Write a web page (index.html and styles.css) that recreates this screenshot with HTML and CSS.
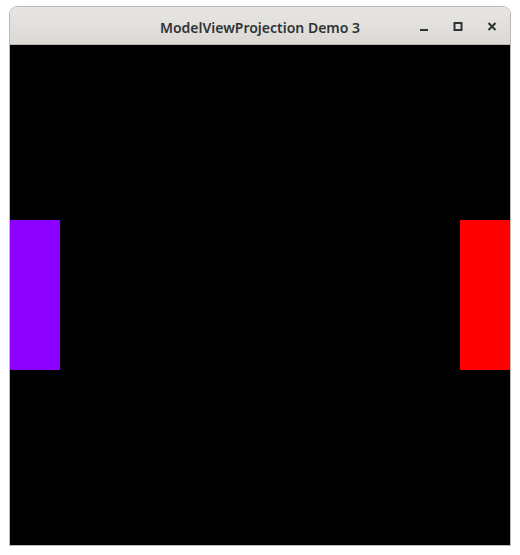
FILE: index.html
```html
<!DOCTYPE html>
<html>
<head>
<meta charset="utf-8">
<link rel="stylesheet" href="styles.css">
</head>
<body>
<div class="window">
  <div class="titlebar">
    <span class="title">ModelViewProjection Demo 3</span>
    <div class="controls">
      <span class="btn"><svg width="10" height="10" viewBox="0 0 10 10"><rect x="1" y="7" width="8" height="2" fill="#2e3436"/></svg></span>
      <span class="btn"><svg width="10" height="10" viewBox="0 0 10 10"><rect x="1.5" y="1" width="7" height="7" fill="none" stroke="#2e3436" stroke-width="2"/></svg></span>
      <span class="btn"><svg width="10" height="10" viewBox="0 0 10 10"><path d="M1.5 1 L8.5 8 M8.5 1 L1.5 8" stroke="#2e3436" stroke-width="2"/></svg></span>
    </div>
  </div>
  <div class="canvas">
    <div class="bar purple"></div>
    <div class="bar red"></div>
  </div>
</div>
</body>
</html>
```
FILE: styles.css
```css
html, body {
  margin: 0;
  padding: 0;
  background: #ffffff;
}
body {
  padding: 6px 0 0 9px;
}
.window {
  width: 500px;
  border: 1px solid #bdbab6;
  border-radius: 8px 8px 0 0;
  display: flex;
  flex-direction: column;
  overflow: hidden;
}
.titlebar {
  height: 37px;
  border-bottom: 1px solid #bfb8b1;
  background: linear-gradient(#e8e6e3, #dcd9d5);
  display: flex;
  align-items: center;
  justify-content: center;
  position: relative;
}
.title {
  font-family: "Noto Sans", "DejaVu Sans", sans-serif;
  font-weight: 600;
  font-size: 14px;
  color: #2e3436;
  margin-top: 3px;
}
.controls {
  position: absolute;
  right: 13px;
  top: 0;
  bottom: 0;
  display: flex;
  align-items: center;
  gap: 24px;
  padding-top: 2px;
}
.btn {
  width: 10px;
  height: 10px;
  display: flex;
}
.canvas {
  height: 500px;
  background: #000000;
  display: flex;
  justify-content: space-between;
  align-items: center;
}
.bar {
  width: 50px;
  height: 150px;
}
.purple { background: #8c00ff; }
.red { background: #ff0000; }
```
